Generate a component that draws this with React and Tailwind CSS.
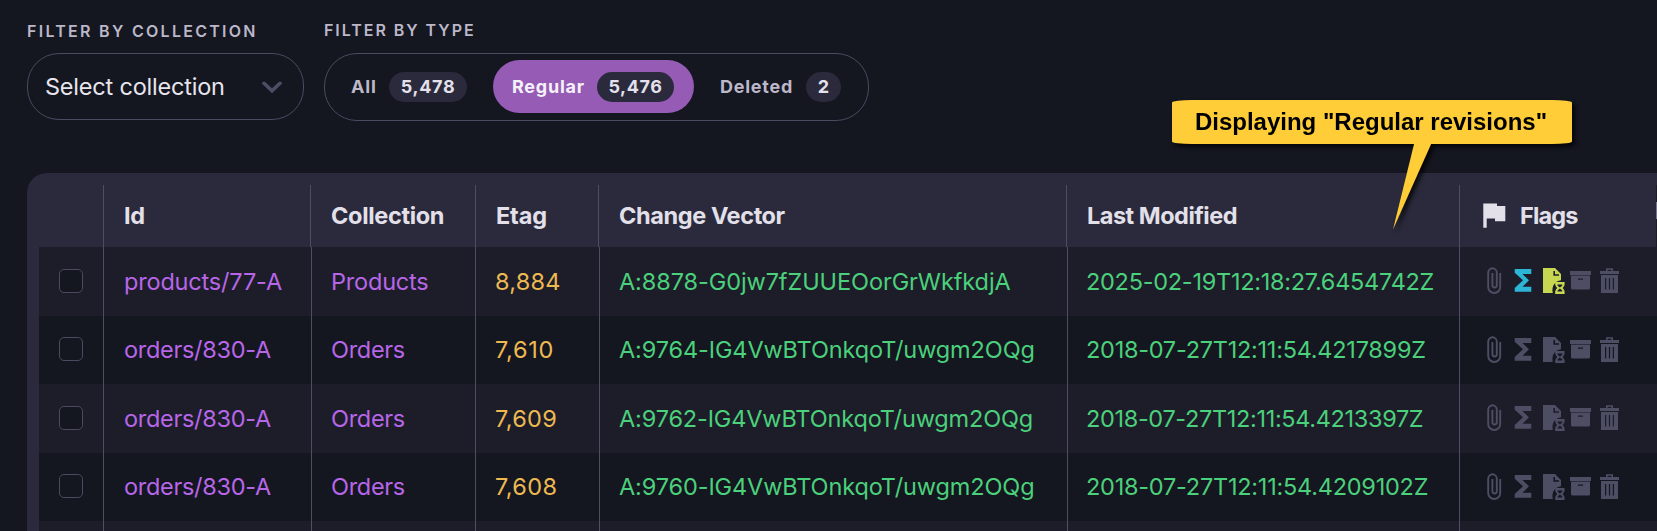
const HEADER_COLS = "grid-cols-[65px_207px_165px_123px_468px_393px_196px_1px]";
const BODY_COLS = "grid-cols-[65px_208px_164px_124px_468px_392px_196px]";

const rows = [
  {
    id: ["products/77-A", "tracking-[-0.18px]"],
    collection: ["Products", "tracking-[-0.2px]"],
    etag: ["8,884", "tracking-[0.25px]"],
    vector: ["A:8878-G0jw7fZUUEOorGrWkfkdjA", "tracking-[-0.09px]"],
    modified: ["2025-02-19T12:18:27.6454742Z", "tracking-[-0.27px]"],
    active: true,
    height: "h-[69px]",
    bg: "bg-[#1c1d29]",
  },
  {
    id: ["orders/830-A", "tracking-[-0.3px]"],
    collection: ["Orders", "tracking-[-0.3px]"],
    etag: ["7,610", "tracking-[0.7px]"],
    vector: ["A:9764-IG4VwBTOnkqoT/uwgm2OQg", "tracking-[-0.12px]"],
    modified: ["2018-07-27T12:11:54.4217899Z", "tracking-[-0.26px]"],
    height: "h-[68px]",
    bg: "bg-[#141620]",
  },
  {
    id: ["orders/830-A", "tracking-[-0.3px]"],
    collection: ["Orders", "tracking-[-0.3px]"],
    etag: ["7,609", "tracking-[0.3px]"],
    vector: ["A:9762-IG4VwBTOnkqoT/uwgm2OQg", "tracking-[-0.15px]"],
    modified: ["2018-07-27T12:11:54.4213397Z", "tracking-[-0.34px]"],
    height: "h-[69px]",
    bg: "bg-[#1c1d29]",
  },
  {
    id: ["orders/830-A", "tracking-[-0.3px]"],
    collection: ["Orders", "tracking-[-0.3px]"],
    etag: ["7,608", "tracking-[0.4px]"],
    vector: ["A:9760-IG4VwBTOnkqoT/uwgm2OQg", "tracking-[-0.12px]"],
    modified: ["2018-07-27T12:11:54.4209102Z", "tracking-[-0.24px]"],
    height: "h-[68px]",
    bg: "bg-[#141620]",
  },
];

function PaperclipIcon() {
  return (
    <svg width="15" height="27" viewBox="0 0 15 27" fill="none" stroke="currentColor" strokeWidth="1.9">
      <path d="M13.2 6V20a6 6 0 0 1-12 0V5.6a4.3 4.3 0 0 1 8.6 0V18.3a2.2 2.2 0 0 1-4.4 0V6" />
    </svg>
  );
}

function SigmaIcon() {
  return (
    <svg width="18" height="27" viewBox="0 0 18 27" fill="currentColor">
      <path d="M.7 2H17.3V7H8.5L15 13.3 8.5 19.7H17.3V24.8H.7V21L9 13.3.7 5.7Z" />
    </svg>
  );
}

function FileHourglassIcon() {
  return (
    <svg width="22" height="27" viewBox="0 0 22 27" fill="currentColor" fillRule="evenodd">
      <path d="M0 1H12L18 7V13.2C12.2 13.6 8.2 19 9.8 26H0ZM10.4 4V8.8H16V7.2H12V4Z" />
      <path d="M12.2 15H21.6V18.4H20.9V19.6L19.6 21 20.9 22.4V23.6H21.6V27H12.2V23.6H12.9V22.4L14.2 21 12.9 19.6V18.4H12.2ZM14.6 17.6V18.8L16.9 20.6 19.2 18.8V17.6ZM16.9 21.6 14.6 23.4V24.6H19.2V23.4Z" />
    </svg>
  );
}

function ArchiveIcon() {
  return (
    <svg width="21" height="27" viewBox="0 0 21 27" fill="currentColor" fillRule="evenodd">
      <path d="M0 4H21V8H0Z" />
      <path d="M1 8.9H20V21a1.5 1.5 0 0 1-1.5 1.5H2.5A1.5 1.5 0 0 1 1 21ZM8 11.6V12.7H13V11.6Z" />
      <path d="M1 8H20V9H1Z" opacity=".45" />
    </svg>
  );
}

function TrashIcon() {
  return (
    <svg width="19" height="27" viewBox="0 0 19 27" fill="currentColor" fillRule="evenodd">
      <path d="M0 4H6V1.2H13V4H19V7H0ZM7.6 2.7V4H11.4V2.7Z" />
      <path d="M1 8H18V26H1ZM5 11V22.5H6.2V11ZM8.9 11V22.5H10.1V11ZM12.8 11V22.5H14V11Z" />
    </svg>
  );
}

function FlagIcon() {
  return (
    <svg width="23" height="26" viewBox="0 0 23 26" fill="currentColor">
      <path d="M.3 .4H14V3H22.3V18.2H12V15.6H3.7V24.8H.3Z" />
    </svg>
  );
}

function HeaderCell({ children, className = "" }) {
  return (
    <div className={`flex h-full items-center border-r border-[#4d4d63] pb-px pl-[20px] ${className}`}>
      {children}
    </div>
  );
}

function BodyCell({ value, className }) {
  return (
    <div className={`flex h-full items-center border-r border-[#4d4d63] whitespace-nowrap ${className}`}>
      <span className={value[1]}>{value[0]}</span>
    </div>
  );
}

function Row({ row }) {
  return (
    <div className={`grid ${BODY_COLS} ${row.height} ${row.bg}`}>
      <div className="flex items-center border-r border-[#4d4d63] pb-[2px] pl-[20px]">
        <div className="size-[24px] rounded-[5px] border border-[#4a4a60] bg-[#141620]" />
      </div>
      <BodyCell value={row.id} className="pl-[20px] text-[#b866e8]" />
      <BodyCell value={row.collection} className="pl-[19px] text-[#b866e8]" />
      <BodyCell value={row.etag} className="pl-[19px] text-[#edb951]" />
      <BodyCell value={row.vector} className="pl-[19px] text-[#4bd07b]" />
      <BodyCell value={row.modified} className="pl-[18px] text-[#4bd07b]" />
      <div className="flex items-start pt-[20px] pl-[27px] text-[#4d4d64]">
        <PaperclipIcon />
        <div className={row.active ? "ml-[12px] text-[#2cb5d5]" : "ml-[12px]"}>
          <SigmaIcon />
        </div>
        <div className={row.active ? "ml-[11px] text-[#c7d751]" : "ml-[11px]"}>
          <FileHourglassIcon />
        </div>
        <div className="ml-[5px]">
          <ArchiveIcon />
        </div>
        <div className="ml-[9px]">
          <TrashIcon />
        </div>
      </div>
    </div>
  );
}

function Count({ children, className }) {
  return (
    <span className={`flex h-[30px] items-center justify-center rounded-full bg-[#2a2a3c] text-[#e4e1ec] ${className}`}>
      {children}
    </span>
  );
}

function Callout() {
  return (
    <div className="absolute top-[100px] left-[1172px] h-[130px] w-[400px] drop-shadow-[3px_3px_2px_rgba(0,0,0,0.75)]">
      <div className="flex h-[44px] items-center justify-center rounded-[20px/2.5px] bg-[#ffcd37] pr-[2px] pb-px font-['Liberation_Sans',sans-serif] text-[24px] font-bold whitespace-nowrap text-black">
        <span>Displaying "Regular revisions"</span>
      </div>
      <svg className="absolute top-[43px] left-[220px]" width="40" height="87" viewBox="0 0 40 87" fill="#ffcd37">
        <path d="M22.3 0H39.6L1 86.5Z" />
      </svg>
    </div>
  );
}

export default function App() {
  return (
    <div className="relative h-[531px] w-[1657px] overflow-hidden bg-[#141620] font-[Inter,sans-serif] text-[23.5px] leading-[30px]">
      <div className="flex h-[173px] gap-[20px] pl-[27px]">
        <div className="w-[277px] pt-[21px]">
          <div className="text-[16px] leading-[20px] font-semibold tracking-[2.28px] whitespace-nowrap text-[#bcb8c9]">
            FILTER BY COLLECTION
          </div>
          <div className="mt-[12px] flex h-[67px] items-center justify-between rounded-[32px] border border-[#4a4a60] pr-[21px] pl-[17px] text-[#e8e5ee]">
            <span className="tracking-[-0.21px]">Select collection</span>
            <svg width="20" height="12" viewBox="0 0 20 12" fill="none" stroke="#4d4d64" strokeWidth="3.6" strokeLinecap="round">
              <path d="M2 2.3 10 9.8 18 2.3" />
            </svg>
          </div>
        </div>
        <div className="w-[545px] pt-[20px]">
          <div className="text-[16px] leading-[20px] font-semibold tracking-[1.95px] whitespace-nowrap text-[#bcb8c9]">
            FILTER BY TYPE
          </div>
          <div className="mt-[13px] flex h-[68px] rounded-[33px] border border-[#4a4a60] pt-[6px] pl-[6px] text-[18px] font-bold text-[#bcb8c9]">
            <div className="flex h-[53px] w-[162px] items-center pl-[20px]">
              <span className="w-[38px] tracking-[0.8px]">All</span>
              <Count className="w-[78px] tracking-[0.7px]">5,478</Count>
            </div>
            <div className="flex h-[53px] w-[201px] items-center rounded-full bg-[#955bb5] pl-[19px] text-[#f5f1f8]">
              <span className="w-[85px] tracking-[0.75px]">Regular</span>
              <Count className="w-[77px] tracking-[0.6px]">5,476</Count>
            </div>
            <div className="flex h-[53px] items-center pl-[26px]">
              <span className="w-[86px] tracking-[0.75px]">Deleted</span>
              <Count className="w-[35px]">2</Count>
            </div>
          </div>
        </div>
      </div>

      <div className="ml-[27px] h-[358px] rounded-tl-[20px] bg-[#2a2a3c] pt-[12px] pl-[12px]">
        <div className={`grid h-[62px] ${HEADER_COLS} font-bold whitespace-nowrap text-[#e3e0ea]`}>
          <HeaderCell />
          <HeaderCell className="tracking-[-0.3px]">Id</HeaderCell>
          <HeaderCell className="tracking-[-0.33px]">Collection</HeaderCell>
          <HeaderCell className="tracking-[-0.15px]">Etag</HeaderCell>
          <HeaderCell className="tracking-[-0.4px]">Change Vector</HeaderCell>
          <HeaderCell className="tracking-[-0.5px]">Last Modified</HeaderCell>
          <div className="flex items-center pb-px pl-[23px] tracking-[-0.85px]">
            <FlagIcon />
            <span className="ml-[14px]">Flags</span>
          </div>
          <div className="bg-[#1c1d29] pt-[17px]">
            <div className="h-[17px] bg-[#77768a]" />
          </div>
        </div>
        {rows.map((row, i) => (
          <Row key={i} row={row} />
        ))}
        <div className={`grid h-[10px] bg-[#1c1d29] ${BODY_COLS}`}>
          {[0, 1, 2, 3, 4, 5].map((n) => (
            <div key={n} className="border-r border-[#4d4d63]" />
          ))}
        </div>
      </div>

      <Callout />
    </div>
  );
}
